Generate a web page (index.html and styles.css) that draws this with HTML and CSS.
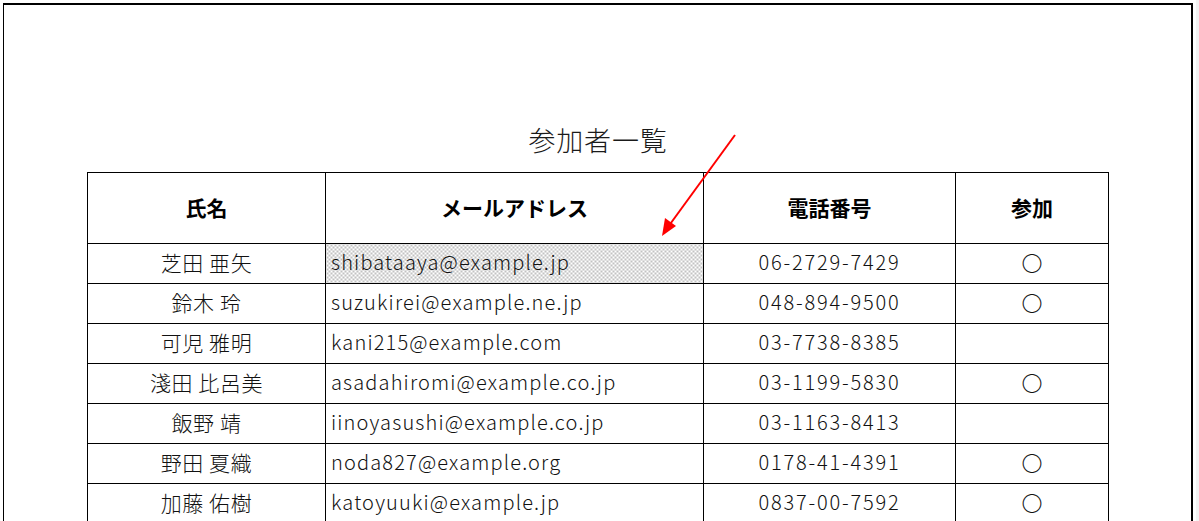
FILE: index.html
```html
<!DOCTYPE html>
<html lang="ja">
<head>
<meta charset="utf-8">
<link rel="stylesheet" href="styles.css">
</head>
<body>
<div class="sheet">
  <h1 class="title">参加者一覧</h1>
  <table class="list">
    <colgroup>
      <col class="c-name"><col class="c-mail"><col class="c-tel"><col class="c-join">
    </colgroup>
    <thead>
      <tr><th>氏名</th><th>メールアドレス</th><th>電話番号</th><th>参加</th></tr>
    </thead>
    <tbody>
      <tr><td class="name">芝田 亜矢</td><td class="mail selected">shibataaya@example.jp</td><td class="tel">06-2729-7429</td><td class="join">〇</td></tr>
      <tr><td class="name">鈴木 玲</td><td class="mail">suzukirei@example.ne.jp</td><td class="tel">048-894-9500</td><td class="join">〇</td></tr>
      <tr><td class="name">可児 雅明</td><td class="mail">kani215@example.com</td><td class="tel">03-7738-8385</td><td class="join"></td></tr>
      <tr><td class="name">淺田 比呂美</td><td class="mail">asadahiromi@example.co.jp</td><td class="tel">03-1199-5830</td><td class="join">〇</td></tr>
      <tr><td class="name">飯野 靖</td><td class="mail">iinoyasushi@example.co.jp</td><td class="tel">03-1163-8413</td><td class="join"></td></tr>
      <tr><td class="name">野田 夏織</td><td class="mail">noda827@example.org</td><td class="tel">0178-41-4391</td><td class="join">〇</td></tr>
      <tr><td class="name">加藤 佑樹</td><td class="mail">katoyuuki@example.jp</td><td class="tel">0837-00-7592</td><td class="join">〇</td></tr>
    </tbody>
  </table>
  <svg class="arrow" width="90" height="120" viewBox="0 0 90 120">
    <line x1="84" y1="9" x2="17" y2="101" stroke="#ff0000" stroke-width="2"/>
    <polygon points="11,110 14,92 25,100" fill="#ff0000"/>
  </svg>
</div>
</body>
</html>
```
FILE: styles.css
```css
html, body {
  margin: 0;
  padding: 0;
}
body {
  background: linear-gradient(to right, #ffffff 1196px, #f3f3f3 1196px);
  font-family: "Noto Sans CJK JP", "Noto Sans", sans-serif;
  color: #000;
  height: 521px;
  overflow: hidden;
}
.sheet {
  position: relative;
  margin: 3px 0 0 3px;
  width: 1190px;
  height: 700px;
  border-top: 2px solid #000;
  border-left: 1px solid #000;
  border-right: 2px solid #000;
  background: #fff;
  padding-top: 118px;
  box-sizing: border-box;
}
.title {
  margin: 0 0 15px 0;
  width: 1188px;
  font-size: 27px;
  font-weight: 300;
  line-height: 34px;
  text-align: center;
  letter-spacing: 0.8px;
  color: #1a1a1a;
}
.list {
  margin-left: 83px;
  border-collapse: collapse;
  table-layout: fixed;
  width: 1021px;
}
.c-name { width: 238px; }
.c-mail { width: 378px; }
.c-tel { width: 252px; }
.c-join { width: 153px; }
.list th, .list td {
  border: 1px solid #000;
  padding: 0 0 3px 0;
  text-align: center;
  font-size: 20px;
  line-height: 28px;
  white-space: nowrap;
}
.list th {
  height: 67px;
  font-weight: bold;
  font-size: 21px;
}
.list td {
  height: 36px;
  font-weight: 300;
  color: #111;
}
.list td.name {
  font-size: 21px;
  letter-spacing: 0.6px;
}
.list td.mail {
  text-align: left;
  padding-left: 5px;
  letter-spacing: 1.15px;
}
.list td.tel {
  letter-spacing: 1.8px;
}
.list td.join {
  font-size: 21px;
}
.list td.selected {
  background-image:
    radial-gradient(circle at 1px 1px, #7a7a7a 0.6px, transparent 0.8px),
    radial-gradient(circle at 1px 1px, #7a7a7a 0.6px, transparent 0.8px);
  background-size: 4px 4px, 4px 4px;
  background-position: 0 0, 2px 2px;
}
.arrow {
  position: absolute;
  left: 647px;
  top: 121px;
}
```
